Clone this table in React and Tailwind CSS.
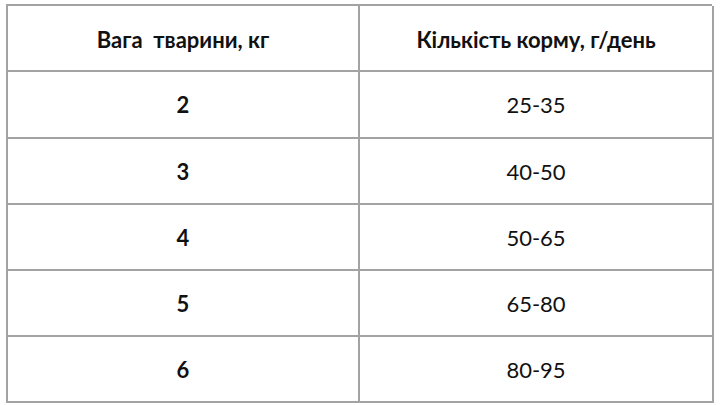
export default function App() {
  const rows = [
    ["2", "25-35"],
    ["3", "40-50"],
    ["4", "50-65"],
    ["5", "65-80"],
    ["6", "80-95"],
  ];
  const heights = ["h-[67px]", "h-[66px]", "h-[66px]", "h-[66px]", "h-[66px]"];
  return (
    <div className="w-[720px] h-[405px] bg-white pt-[4px] pl-[6px]" style={{ fontFamily: "Lato, 'Open Sans', sans-serif" }}>
      <div className="w-[706px] grid grid-cols-[352px_354px] border-l-2 border-t-2 border-[#a3a3a3] text-[#111]">
        <div className="h-[66px] border-r-2 border-b-2 border-[#a3a3a3] flex items-center justify-center pt-[2px] font-bold text-[22px]">Вага&nbsp; тварини, кг</div>
        <div className="h-[66px] border-r-2 border-b-2 border-[#a3a3a3] flex items-center justify-center pt-[2px] font-bold text-[22px]">Кількість корму, г/день</div>
        {rows.map((r, i) => (
          <>
            <div key={"a" + i} className={`${heights[i]} border-r-2 border-b-2 border-[#a3a3a3] flex items-center justify-center font-bold text-[22px]`}>{r[0]}</div>
            <div key={"b" + i} className={`${heights[i]} border-r-2 border-b-2 border-[#a3a3a3] flex items-center justify-center text-[22px]`}>{r[1]}</div>
          </>
        ))}
      </div>
    </div>
  );
}
